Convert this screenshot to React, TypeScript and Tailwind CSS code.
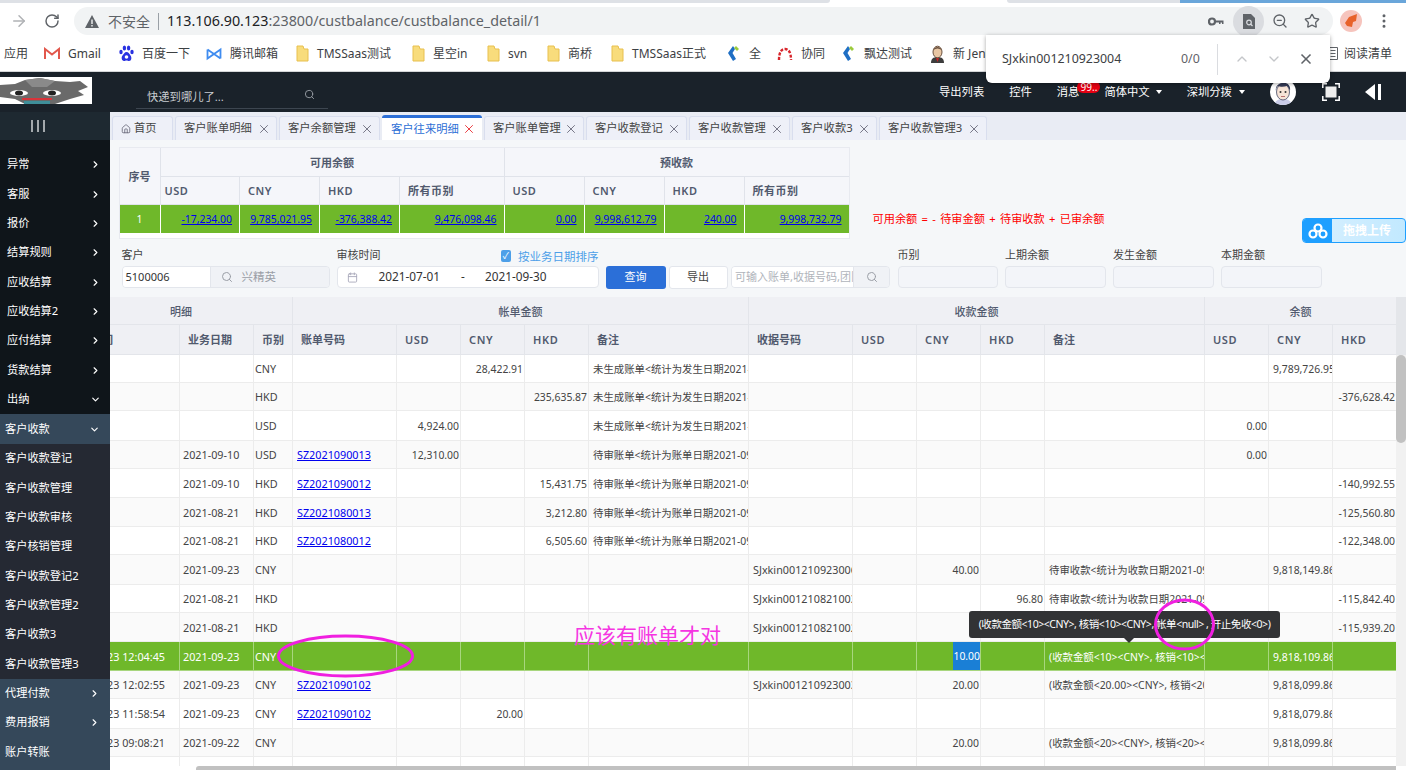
import {
  ArrowRight,
  Calendar,
  ChevronDown,
  ChevronRight,
  ChevronUp,
  EllipsisVertical,
  House,
  RotateCw,
  Search,
  Star,
  X,
  ZoomOut,
} from 'lucide-react'

function Folder() {
  return (
    <svg width="13" height="17" viewBox="0 0 13 17" className="shrink-0">
      <path d="M1 1h6l1 3h4v12H1z" fill="#f8dc7c" stroke="#e8c04e" />
    </svg>
  )
}

function Gmail() {
  return (
    <svg width="16" height="13" viewBox="0 0 16 13">
      <path d="M1 12V2l7 5.5L15 2v10" fill="none" stroke="#e2574c" strokeWidth="2" />
    </svg>
  )
}

function Paw() {
  return (
    <svg width="15" height="17" viewBox="0 0 15 17">
      <g fill="#2932e1">
        <ellipse cx="2" cy="7" rx="1.7" ry="2.2" />
        <ellipse cx="5.4" cy="3" rx="1.7" ry="2.5" />
        <ellipse cx="9.6" cy="3" rx="1.7" ry="2.5" />
        <ellipse cx="13" cy="7" rx="1.7" ry="2.2" />
        <path d="M7.5 7c-2 0-2.5 2-4 3.5S2.5 16 5 16c1 0 1.500-.5 2.500-.5S9 16 10 16c2.500 0 3-3.500 1.500-5.500S9.500 7 7.500 7z" />
      </g>
      <circle cx="7.500" cy="12" r="1.800" fill="#fff" />
    </svg>
  )
}

function TencentMail() {
  return (
    <svg width="16" height="14" viewBox="0 0 16 14" fill="none" stroke="#3f8cf0" strokeWidth="1.800">
      <path d="M1.500 2.500v9l13-9v9M1.500 2.500l13 9" />
    </svg>
  )
}

function Diamond() {
  return (
    <svg width="14" height="17" viewBox="0 0 14 17">
      <path d="M6 1 1 8l5 8 3-2-3.500-6L8 4z" fill="#1f6fc4" />
      <path d="M9 1l3 3-2 2-3-3z" fill="#9ccb3c" />
    </svg>
  )
}

function Arch() {
  return (
    <svg width="16" height="14" viewBox="0 0 16 14" fill="none" stroke="#d8262c" strokeWidth="2.400" strokeDasharray="3 1.500">
      <path d="M2 13c0-7 2-11 6-11s6 4 6 11" />
    </svg>
  )
}

function Jenkins() {
  return (
    <svg width="15" height="18" viewBox="0 0 15 18">
      <path d="M1 18c0-4 2-6 6.500-6S14 14 14 18z" fill="#3d3d3d" />
      <path d="M6 13h3l-1.500 4z" fill="#c22" />
      <ellipse cx="7.500" cy="7" rx="4.500" ry="5.800" fill="#e9c7a4" stroke="#6b5240" />
      <path d="M3.500 5C4 1 11 1 11.500 5 9 3 6 3 3.500 5z" fill="#6b5240" />
    </svg>
  )
}

function Logo() {
  return (
    <svg width="92" height="27" viewBox="0 0 92 27" className="bg-white shrink-0">
      <path d="M0 8l15-1 10-4 15-2 15 3 15 1 10-1 8 6-10 4 6 4-14 4-15 5H25l-10-5-15-2z" fill="#6a6a6a" />
      <path d="M25 3l15-2 15 3-8 6H32z" fill="#8a8a8a" />
      <ellipse cx="19" cy="16" rx="9" ry="3" fill="#fff" />
      <ellipse cx="52" cy="16" rx="9" ry="3" fill="#fff" />
      <ellipse cx="19" cy="16" rx="4" ry="2.500" fill="#222" />
      <ellipse cx="52" cy="16" rx="4" ry="2.500" fill="#222" />
      <path d="M22 22h30" stroke="#d8343a" strokeWidth="2" />
      <path d="M24 24h26v3H24z" fill="#3f8f9a" />
    </svg>
  )
}

function Avatar() {
  return (
    <svg width="26" height="26" viewBox="0 0 26 26" className="rounded-full bg-white">
      <path d="M4 26c1-5 5-6 9-6s8 1 9 6z" fill="#c9cce8" />
      <ellipse cx="13" cy="13" rx="6.500" ry="8" fill="#f6e3d6" stroke="#444a66" strokeWidth=".8" />
      <path d="M6 12C4 2 22 0 20 12c-1-3-2-4-3-5-3 1-7 1-9 0-1 1-2 2-2 5z" fill="#343a56" />
      <circle cx="10.500" cy="13" r="1" fill="#333" />
      <circle cx="15.500" cy="13" r="1" fill="#333" />
      <path d="M11 17.500h4" stroke="#a55" strokeWidth=".8" />
    </svg>
  )
}

const bookmarks = [
  { icon: <Gmail />, text: 'Gmail', cls: 'ml-[16px] w-[74px]' },
  { icon: <Paw />, text: '百度一下', cls: 'ml-[1px] w-[87px]' },
  { icon: <TencentMail />, text: '腾讯邮箱', cls: 'ml-[0px] w-[90px]' },
  { icon: <Folder />, text: 'TMSSaas测试', cls: 'ml-[0px] w-[116px]' },
  { icon: <Folder />, text: '星空in', cls: 'ml-[0px] w-[75px]' },
  { icon: <Folder />, text: 'svn', cls: 'ml-[0px] w-[60px]' },
  { icon: <Folder />, text: '商桥', cls: 'ml-[0px] w-[64px]' },
  { icon: <Folder />, text: 'TMSSaas正式', cls: 'ml-[0px] w-[116px]' },
  { icon: <Diamond />, text: '全', cls: 'ml-[0px] w-[50px]' },
  { icon: <Arch />, text: '协同', cls: 'ml-[0px] w-[65px]' },
  { icon: <Diamond />, text: '飘达测试', cls: 'ml-[0px] w-[88px]' },
  { icon: <Jenkins />, text: '新 Jenkins', cls: 'ml-[0px] w-[80px]' },
]

const tabs = [
  { text: '客户账单明细', cls: 'w-[102px]' },
  { text: '客户余额管理', cls: 'w-[101px]' },
  { text: '客户往来明细', cls: 'w-[100px]', active: true },
  { text: '客户账单管理', cls: 'w-[100px]' },
  { text: '客户收款登记', cls: 'w-[101px]' },
  { text: '客户收款管理', cls: 'w-[101px]' },
  { text: '客户收款3', cls: 'w-[85px]' },
  { text: '客户收款管理3', cls: 'w-[108px]' },
]

const topMenu = ['异常', '客服', '报价', '结算规则', '应收结算', '应收结算2', '应付结算', '货款结算']
const subMenu = ['客户收款登记', '客户收款管理', '客户收款审核', '客户核销管理', '客户收款登记2', '客户收款管理2', '客户收款3', '客户收款管理3']
const bottomMenu = ['代理付款', '费用报销', '账户转账']

const summaryCols = ['w-[79.500px]', 'w-[80px]', 'w-[80px]', 'w-[104.500px]', 'w-[80px]', 'w-[80px]', 'w-[80px]', 'w-[104px]']
const summaryHead = ['USD', 'CNY', 'HKD', '所有币别', 'USD', 'CNY', 'HKD', '所有币别']
const summaryVals = ['-17,234.00', '9,785,021.95', '-376,388.42', '9,476,098.46', '0.00', '9,998,612.79', '240.00', '9,998,732.79']

const tableCols = ['w-[124px]', 'w-[74px]', 'w-[39px]', 'w-[104px]', 'w-[64px]', 'w-[64px]', 'w-[64px]', 'w-[160px]', 'w-[104px]', 'w-[64px]', 'w-[64px]', 'w-[64px]', 'w-[160px]', 'w-[64px]', 'w-[64px]', 'w-[64px]']
const tableHead = ['', '业务日期', '币别', '账单号码', 'USD', 'CNY', 'HKD', '备注', '收据号码', 'USD', 'CNY', 'HKD', '备注', 'USD', 'CNY', 'HKD']
const numeric = [4, 5, 6, 9, 10, 11, 13, 14, 15]
const notes = [7, 12]

const n1 = '未生成账单<统计为发生日期2021-09-30>'
const n2 = '待审账单<统计为账单日期2021-09-30>'
const n3 = '待审收款<统计为收款日期2021-09-30>'

const rows = [
  { h: 'h-[28px]', c: ['', '', 'CNY', '', '', '28,422.91', '', n1, '', '', '', '', '', '', '9,789,726.95', ''] },
  { h: 'h-[28px]', c: ['', '', 'HKD', '', '', '', '235,635.87', n1, '', '', '', '', '', '', '', '-376,628.42'] },
  { h: 'h-[30px]', c: ['', '', 'USD', '', '4,924.00', '', '', n1, '', '', '', '', '', '0.00', '', ''] },
  { h: 'h-[28px]', c: ['', '2021-09-10', 'USD', 'SZ2021090013', '12,310.00', '', '', n2, '', '', '', '', '', '0.00', '', ''] },
  { h: 'h-[29px]', c: ['', '2021-09-10', 'HKD', 'SZ2021090012', '', '', '15,431.75', n2, '', '', '', '', '', '', '', '-140,992.55'] },
  { h: 'h-[29px]', c: ['', '2021-08-21', 'HKD', 'SZ2021080013', '', '', '3,212.80', n2, '', '', '', '', '', '', '', '-125,560.80'] },
  { h: 'h-[28px]', c: ['', '2021-08-21', 'HKD', 'SZ2021080012', '', '', '6,505.60', n2, '', '', '', '', '', '', '', '-122,348.00'] },
  { h: 'h-[30px]', c: ['', '2021-09-23', 'CNY', '', '', '', '', '', 'SJxkin001210923006', '', '40.00', '', n3, '', '9,818,149.86', ''] },
  { h: 'h-[28px]', c: ['', '2021-08-21', 'HKD', '', '', '', '', '', 'SJxkin001210821003', '', '', '96.80', n3, '', '', '-115,842.40'] },
  { h: 'h-[29px]', c: ['', '2021-08-21', 'HKD', '', '', '', '', '', 'SJxkin001210821002', '', '', '', '', '', '', '-115,939.20'] },
  { h: 'h-[29px]', selected: true, c: ['2021-09-23 12:04:45', '2021-09-23', 'CNY', '', '', '', '', '', '', '', '10.00', '', '(收款金额<10><CNY>, 核销<10><CNY>', '', '9,818,109.86', ''] },
  { h: 'h-[28px]', c: ['2021-09-23 12:02:55', '2021-09-23', 'CNY', 'SZ2021090102', '', '', '', '', 'SJxkin001210923003', '', '20.00', '', '(收款金额<20.00><CNY>, 核销<20.00>', '', '9,818,099.86', ''] },
  { h: 'h-[30px]', c: ['2021-09-23 11:58:54', '2021-09-23', 'CNY', 'SZ2021090102', '', '20.00', '', '', '', '', '', '', '', '', '9,818,079.86', ''] },
  { h: 'h-[28px]', c: ['2021-09-23 09:08:21', '2021-09-22', 'CNY', '', '', '', '', '', '', '', '20.00', '', '(收款金额<20><CNY>, 核销<20><CNY>', '', '9,818,099.86', ''] },
  { h: 'h-[29px]', c: ['', '', '', '', '', '', '', '', '', '', '', '', '', '', '', ''] },
]

function Field({ label, cls }: { label: string; cls: string }) {
  return (
    <div className={`flex flex-col ${cls}`}>
      <span className="h-[18px] text-[11px] leading-[14px] text-[#444]">{label}</span>
      <div className="h-[22px] rounded-[4px] border border-[#e3e6ec] bg-[#f3f5f9]" />
    </div>
  )
}

export default function App() {
  return (
    <div className="w-[1406px] h-[770px] relative overflow-hidden flex flex-col bg-white font-['Noto_Sans','Noto_Sans_CJK_SC',sans-serif]">
      {/* browser chrome */}
      <div className="h-[3px] flex shrink-0">
        <div className="w-[830px] bg-[#dee1e6] rounded-br-[3px]" />
        <div className="w-[177px] bg-white" />
        <div className="w-[173px] bg-[#dee1e6] rounded-bl-[3px]" />
        <div className="flex-1 bg-[#6aa6da]" />
      </div>
      <div className="h-[33px] shrink-0 flex items-center pt-[4px] pb-[1px] pr-[8px]">
        <ArrowRight size={18} className="ml-[10px] text-[#b0b2b5]" />
        <RotateCw size={16} strokeWidth={2.200} className="ml-[16px] text-[#5f6368]" />
        <div className="ml-[14px] w-[1259px] h-[28px] rounded-full bg-[#f1f3f4] flex items-center">
          <svg width="14" height="13" viewBox="0 0 14 13" className="ml-[11px]">
            <path d="M7 0l7 13H0z" fill="#5f6368" />
            <path d="M6.300 4.500h1.400v4.500H6.300zM6.300 10h1.400v1.400H6.300z" fill="#f1f3f4" />
          </svg>
          <span className="ml-[9px] text-[14px] text-[#5f6368] w-[42px] whitespace-nowrap">不安全</span>
          <span className="ml-[8px] h-[17px] w-px bg-[#9aa0a6]" />
          <span className="ml-[8px] text-[14.300px] whitespace-nowrap text-[#202124]">
            113.106.90.123<span className="text-[#5f6368]">:23800/custbalance/custbalance_detail/1</span>
          </span>
          <svg width="16" height="9" viewBox="0 0 16 9" className="ml-auto">
            <circle cx="4" cy="4.500" r="3" fill="none" stroke="#5f6368" strokeWidth="2.200" />
            <path d="M7 3.500h8.500V7H14V5.500h-1.500V7H11V5.500H7z" fill="#5f6368" />
          </svg>
          <div className="ml-[9px] w-[31px] h-[31px] -my-[2px] rounded-full bg-[#dadce0] flex items-center justify-center">
            <svg width="12" height="15" viewBox="0 0 12 15">
              <path d="M0 0h8l4 4v11H0z" fill="#5f6368" />
              <circle cx="6" cy="8.500" r="2.300" fill="none" stroke="#dadce0" strokeWidth="1.200" />
              <path d="M7.500 10l2 2" stroke="#dadce0" strokeWidth="1.200" />
            </svg>
          </div>
          <ZoomOut size={16} className="ml-[8px] text-[#5f6368]" />
          <Star size={16} className="ml-[16px] text-[#5f6368]" />
          <span className="w-[13px]" />
        </div>
        <svg width="22" height="22" viewBox="0 0 22 22" className="ml-[7px]">
          <circle cx="11" cy="11" r="11" fill="#f6c4bd" />
          <path d="M5 13l4-6 8-3-1 7-3 1-1 5-5-1z" fill="#e8622a" />
        </svg>
        <EllipsisVertical size={18} className="ml-[13px] text-[#5f6368]" />
      </div>
      <div className="h-[36px] shrink-0 flex items-center border-b border-[#d4d6d8] pl-[4px] text-[12px] text-[#3c4043] whitespace-nowrap">
        <span className="w-[24px]">应用</span>
        {bookmarks.map((b) => (
          <div key={b.text} className={`flex items-center gap-[8px] shrink-0 ${b.cls}`}>
            {b.icon}
            <span>{b.text}</span>
          </div>
        ))}
        <div className="ml-auto flex items-center gap-[6px] pr-[14px]">
          <svg width="10" height="13" viewBox="0 0 10 13" fill="none" stroke="#5f6368">
            <path d="M.5.500h9v12h-9zM2.500 3.500h5M2.500 6.500h5M2.500 9.500h5" />
          </svg>
          <span>阅读清单</span>
        </div>
      </div>

      {/* app header */}
      <div className="h-[40px] shrink-0 bg-[#1a222a] flex items-center text-white text-[11.300px] whitespace-nowrap">
        <div className="self-start mt-[5px]">
          <Logo />
        </div>
        <div className="ml-[44px] mt-[12px] w-[192px] h-[21px] border-b border-[#3d4650] flex items-center justify-between pl-[11px] pr-[13px] text-[#c8ccd0]">
          <span>快递到哪儿了...</span>
          <Search size={11} className="text-[#9aa0a6] -mt-[6px]" />
        </div>
        <span className="ml-[611px]">导出列表</span>
        <span className="ml-[25px]">控件</span>
        <span className="ml-[25px]">消息</span>
        <span className="-mt-[10px] -ml-[2px] w-[23px] h-[12px] rounded-full bg-[#e60012] text-[10px] leading-[12px] text-center">99..</span>
        <span className="ml-[4px]">简体中文</span>
        <span className="ml-[6px] border-x-[3px] border-x-transparent border-t-[4px] border-t-white" />
        <span className="ml-[25px]">深圳分拨</span>
        <span className="ml-[7px] border-x-[3px] border-x-transparent border-t-[4px] border-t-white" />
        <span className="ml-[25px]">
          <Avatar />
        </span>
        <svg width="18" height="18" viewBox="0 0 18 18" className="ml-[26px]" fill="none" stroke="#fff" strokeWidth="1.500">
          <path d="M0.800 5V.800H5M13 .800h4.200V5M17.200 13v4.200H13M5 17.200H.800V13" />
          <rect x="3.500" y="3.500" width="11" height="11" fill="#eee" stroke="none" />
        </svg>
        <svg width="16" height="18" viewBox="0 0 16 18" className="ml-[25px]">
          <path d="M10 1v16L0 9z" fill="#fff" />
          <path d="M13 1h3v16h-3z" fill="#fff" />
        </svg>
      </div>

      <div className="flex-1 flex min-h-0">
        {/* sidebar */}
        <aside className="w-[110px] shrink-0 flex flex-col bg-[#0f151a] text-white text-[11.200px] whitespace-nowrap">
          <div className="h-[28px] bg-[#1e2931] flex items-center justify-center gap-[4px] pr-[34px]">
            <span className="w-[2px] h-[12px] bg-[#a4a9ad]" />
            <span className="w-[2px] h-[12px] bg-[#a4a9ad]" />
            <span className="w-[2px] h-[12px] bg-[#a4a9ad]" />
          </div>
          <div className="pt-[10px]">
            {topMenu.map((m) => (
              <div key={m} className="h-[29.350px] flex items-center justify-between pl-[7px] pr-[9px]">
                <span>{m}</span>
                <ChevronRight size={11} strokeWidth={2.500} />
              </div>
            ))}
            <div className="h-[29.350px] flex items-center justify-between pl-[7px] pr-[9px]">
              <span>出纳</span>
              <ChevronDown size={11} strokeWidth={2.500} />
            </div>
          </div>
          <div className="h-[30px] bg-[#35485a] flex items-center justify-between pl-[5px] pr-[10px]">
            <span>客户收款</span>
            <ChevronDown size={11} strokeWidth={2.500} />
          </div>
          <div className="bg-[#252933]">
            {subMenu.map((m) => (
              <div key={m} className="h-[29.350px] flex items-center pl-[5px]">
                {m}
              </div>
            ))}
          </div>
          <div className="flex-1 bg-[#35485a]">
            {bottomMenu.map((m, i) => (
              <div key={m} className="h-[29.350px] flex items-center justify-between pl-[5px] pr-[10px]">
                <span>{m}</span>
                {i < 2 && <ChevronRight size={11} strokeWidth={2.500} />}
              </div>
            ))}
          </div>
        </aside>

        <main className="flex-1 min-w-0 flex flex-col bg-[#f5f7f9] text-[#444] whitespace-nowrap">
          {/* tab bar */}
          <div className="h-[28px] shrink-0 bg-[#e9ecf4] flex items-end pl-[2px] gap-[2px] text-[11.300px]">
            <div className="w-[61px] h-[24px] bg-[#eef0f8] border border-[#d9deee] border-b-0 rounded-t-[3px] flex items-center pl-[8px] gap-[3px]">
              <House size={10} className="text-[#667]" />
              <span>首页</span>
            </div>
            {tabs.map((t) => (
              <div
                key={t.text}
                className={
                  t.active
                    ? `${t.cls} h-[25px] bg-white border-t-[3px] border-t-[#2d6fd6] rounded-t-[3px] flex items-center justify-between pl-[9px] pr-[6px] text-[#2d6fd6]`
                    : `${t.cls} h-[24px] bg-[#eef0f8] border border-[#d9deee] border-b-0 rounded-t-[3px] flex items-center justify-between pl-[8px] pr-[5px]`
                }
              >
                <span>{t.text}</span>
                <X size={14} strokeWidth={1.500} className={t.active ? 'text-[#e8272c]' : 'text-[#667]'} />
              </div>
            ))}
          </div>

          {/* summary */}
          <div className="h-[108px] shrink-0 flex items-start pl-[8.500px] pt-[7px]">
            <table className="table-fixed w-[729.500px] border-separate border-spacing-0 border border-[#e8eaf0] bg-white text-[10.400px]">
              <colgroup>
                <col className="w-[41px]" />
                {summaryCols.map((c, i) => (
                  <col key={i} className={c} />
                ))}
              </colgroup>
              <thead className="bg-[#f5f6fa] font-semibold text-[#515a6e] text-[11px]">
                <tr className="h-[29px]">
                  <th rowSpan={2} className="font-semibold pt-[2px] border-r border-b border-[#e0e3ea]">序号</th>
                  <th colSpan={4} className="font-semibold pt-[2px] border-r border-b border-[#e0e3ea]">可用余额</th>
                  <th colSpan={4} className="font-semibold pt-[2px] border-b border-[#e0e3ea]">预收款</th>
                </tr>
                <tr className="h-[28px]">
                  {summaryHead.map((h, i) => (
                    <th
                      key={i}
                      className={
                        i === 0
                          ? 'text-left pl-[4px] pt-[2px] font-semibold tracking-[0.500px] border-r border-b border-[#e0e3ea]'
                          : 'text-left pl-[8px] pt-[2px] font-semibold tracking-[0.500px] border-r border-b border-[#e0e3ea] last:border-r-0'
                      }
                    >
                      {h}
                    </th>
                  ))}
                </tr>
              </thead>
              <tbody>
                <tr className="h-[28px] bg-[#6fb82a]">
                  <td className="text-center pt-[2px] text-white border-r border-white">1</td>
                  {summaryVals.map((v, i) => (
                    <td key={i} className="text-right pt-[2px] pr-[7px] border-r border-white last:border-r-0">
                      <a className="underline text-[#0000ee]">{v}</a>
                    </td>
                  ))}
                </tr>
                <tr className="h-[5px]">
                  <td colSpan={9} />
                </tr>
              </tbody>
            </table>
            <span className="ml-[23px] mt-[64px] text-[11.200px] [word-spacing:1.400px] text-[#f00]">可用余额 = - 待审金额 + 待审收款 + 已审余额</span>
          </div>

          {/* filters */}
          <div className="h-[49px] shrink-0 flex items-start pl-[11.500px] text-[11px]">
            <div className="w-[208px] flex flex-col">
              <span className="h-[18px] leading-[14px]">客户</span>
              <div className="h-[22px] flex border border-[#e3e6ec] rounded-[4px] overflow-hidden">
                <span className="w-[87px] bg-white pl-[3px] leading-[20px] text-[#333]">5100006</span>
                <span className="flex-1 bg-[#f0f2f6] border-l border-[#e3e6ec] flex items-center pl-[10px] gap-[9px] text-[#9a9ea6] text-[11.500px]">
                  <Search size={12} />
                  兴精英
                </span>
              </div>
            </div>
            <div className="ml-[7px] w-[262px] flex flex-col">
              <div className="h-[18px] flex items-start leading-[14px]">
                <span>审核时间</span>
                <span className="ml-[120px] mt-[2px] w-[12px] h-[12px] rounded-[2px] bg-[#4d9fe8] text-white text-[9px] leading-[12px] text-center">✓</span>
                <span className="ml-[7px] mt-[2px] text-[11.500px] text-[#4d9fe8]">按业务日期排序</span>
              </div>
              <div className="h-[22px] flex items-center bg-white border border-[#e3e6ec] rounded-[4px] text-[#333] text-[11.800px]">
                <Calendar size={11} className="ml-[9px] text-[#aab]" />
                <span className="ml-[21px]">2021-07-01</span>
                <span className="ml-[21px]">-</span>
                <span className="ml-[20px]">2021-09-30</span>
              </div>
            </div>
            <div className="ml-[7px] mt-[18px] w-[60px] h-[23px] rounded-[3px] bg-[#2b6fd8] text-white flex items-center justify-center">查询</div>
            <div className="ml-[3px] mt-[18px] w-[59px] h-[23px] rounded-[3px] bg-white border border-[#e3e6ec] flex items-center justify-center">导出</div>
            <div className="ml-[3.500px] mt-[18px] w-[159px] h-[22px] flex border border-[#e3e6ec] rounded-[4px] overflow-hidden">
              <span className="w-[121px] bg-white pl-[3px] leading-[20px] text-[#b0b4bb] overflow-hidden">可输入账单,收据号码,团队号</span>
              <span className="flex-1 bg-[#f0f2f6] border-l border-[#e3e6ec] flex items-center pl-[12px] text-[#9a9ea6]">
                <Search size={12} />
              </span>
            </div>
            <Field label="币别" cls="ml-[7.500px] w-[100.500px]" />
            <Field label="上期余额" cls="ml-[7px] w-[101px]" />
            <Field label="发生金额" cls="ml-[7px] w-[100.500px]" />
            <Field label="本期金额" cls="ml-[7.500px] w-[100.500px]" />
          </div>

          {/* detail table */}
          <div className="flex-1 min-h-0 flex">
            <div className="w-[1286px] overflow-hidden">
              <table className="table-fixed w-[1341px] -ml-[54px] border-separate border-spacing-0 bg-white text-[10.800px] text-[#444]">
                <colgroup>
                  {tableCols.map((c, i) => (
                    <col key={i} className={c} />
                  ))}
                </colgroup>
                <thead className="bg-[#eff0f4] text-[#515a6e] text-[11px]">
                  <tr className="h-[28px]">
                    <th colSpan={3} className="font-medium pt-[3px] border-r border-b border-[#e3e5ea] pl-[14px]">明细</th>
                    <th colSpan={5} className="font-medium pt-[3px] border-r border-b border-[#e3e5ea]">帐单金额</th>
                    <th colSpan={5} className="font-medium pt-[3px] border-r border-b border-[#e3e5ea]">收款金额</th>
                    <th colSpan={3} className="font-medium pt-[3px] border-r border-b border-[#e3e5ea]">余额</th>
                  </tr>
                  <tr className="h-[30px]">
                    {tableHead.map((h, i) => (
                      <th
                        key={i}
                        className={
                          numeric.includes(i)
                            ? 'text-left font-semibold pl-[8px] pt-[2px] tracking-[0.600px] border-r border-b border-[#e3e5ea]'
                            : 'text-left font-semibold pl-[8px] pt-[2px] border-r border-b border-[#e3e5ea]'
                        }
                      >
                        {i === 0 ? <span className="block pl-[5px]">审核时间</span> : h}
                      </th>
                    ))}
                  </tr>
                </thead>
                <tbody>
                  {rows.map((r, ri) => (
                    <tr
                      key={ri}
                      className={
                        r.selected
                          ? `${r.h} bg-[#6fb82a] text-white`
                          : ri % 2 === 1
                            ? `${r.h} bg-[#fafafa]`
                            : `${r.h} bg-white`
                      }
                    >
                      {r.c.map((v, ci) => (
                        <td
                          key={ci}
                          className={
                            (r.selected ? 'border-[#a8d67e] ' : 'border-[#ececec] ') +
                            'border-r border-b overflow-hidden leading-none ' +
                            (r.selected && ci === 10 ? 'py-0 ' : 'pt-[2px] pb-0 ') +
                            (numeric.includes(ci)
                              ? 'text-right text-[10.400px] pl-[4px] pr-[1px]'
                              : notes.includes(ci)
                                ? 'text-[10.400px] pl-[4px] pr-0'
                                : ci === 0
                                  ? 'pl-[7px] pr-0'
                                  : ci === 1
                                    ? 'pl-[3px] pr-0'
                                    : ci === 2
                                      ? 'pl-[1px] pr-0'
                                      : 'pl-[4px] pr-0')
                          }
                        >
                          {ci === 3 && v ? (
                            <a className="underline text-[#0000ee]">{v}</a>
                          ) : r.selected && ci === 10 ? (
                            <span className="inline-block leading-[28px] bg-[#1a7fd6] -mr-[1px]">{v}</span>
                          ) : (
                            v
                          )}
                        </td>
                      ))}
                    </tr>
                  ))}
                </tbody>
              </table>
            </div>
            <div className="w-[10px] shrink-0 bg-[#f1f1f1] flex flex-col">
              <div className="h-[58px] bg-[#e4e6ea]" />
              <div className="h-[88px] bg-[#c1c1c1] rounded-[5px]" />
            </div>
          </div>
          <div className="h-[4px] shrink-0 bg-white pl-[86px] pr-[10px]">
            <div className="h-full bg-[#c1c1c1] rounded-tl-[3px]" />
          </div>
        </main>
      </div>

      {/* find in page popup */}
      <div className="absolute left-[986px] top-[35px] w-[344px] h-[48px] bg-white rounded-b-[6px] shadow-[0_1px_4px_rgba(0,0,0,0.35)] flex items-center text-[12.400px] whitespace-nowrap">
        <span className="ml-[16px] w-[179px] text-[#3c4043]">SJxkin001210923004</span>
        <span className="w-[36px] text-[#5f6368]">0/0</span>
        <span className="w-px h-[31px] bg-[#dadce0]" />
        <ChevronUp size={16} className="ml-[16px] text-[#c4c6c9]" />
        <ChevronDown size={16} className="ml-[16px] text-[#c4c6c9]" />
        <X size={16} strokeWidth={2.500} className="ml-[16px] text-[#5f6368]" />
      </div>

      {/* drag upload */}
      <div className="absolute left-[1302px] top-[218px] w-[104px] h-[25px] rounded-[4px] border border-[#1e9fff] bg-gradient-to-r from-[#d8f0ff] to-[#c2e9ff] flex items-center overflow-hidden">
        <span className="w-[29px] h-full bg-[#1e9fff] flex items-center justify-center">
          <svg width="20" height="16" viewBox="0 0 20 16" fill="none" stroke="#fff" strokeWidth="2.200">
            <circle cx="10" cy="5" r="3.500" />
            <circle cx="5" cy="11" r="3.500" />
            <circle cx="15" cy="11" r="3.500" />
          </svg>
        </span>
        <span className="ml-[11px] text-[12px] font-bold text-white">拖拽上传</span>
      </div>

      {/* tooltip */}
      <div className="absolute left-[969px] top-[611px] w-[311px] h-[27px] rounded-[3px] bg-[#323335] text-white text-[10.500px] tracking-[-0.450px] flex items-center justify-center whitespace-nowrap">
        (收款金额&lt;10&gt;&lt;CNY&gt;, 核销&lt;10&gt;&lt;CNY&gt;, 帐单&lt;null&gt; , 开止免收&lt;0&gt;)
        <span className="absolute left-[155px] top-[27px] border-x-[5px] border-x-transparent border-t-[5px] border-t-[#323335]" />
      </div>

      {/* hand-drawn annotations */}
      <span className="absolute left-[574px] top-[620px] text-[21px] leading-[30px] text-[#f535e2] whitespace-nowrap">应该有账单才对</span>
      <svg width="1406" height="770" viewBox="0 0 1406 770" fill="none" stroke="#f01fe0" strokeWidth="3" className="absolute left-0 top-0 pointer-events-none">
        <ellipse cx="345.500" cy="656" rx="67" ry="20" />
        <ellipse cx="1184.500" cy="624.500" rx="29" ry="24.500" />
      </svg>
    </div>
  )
}
